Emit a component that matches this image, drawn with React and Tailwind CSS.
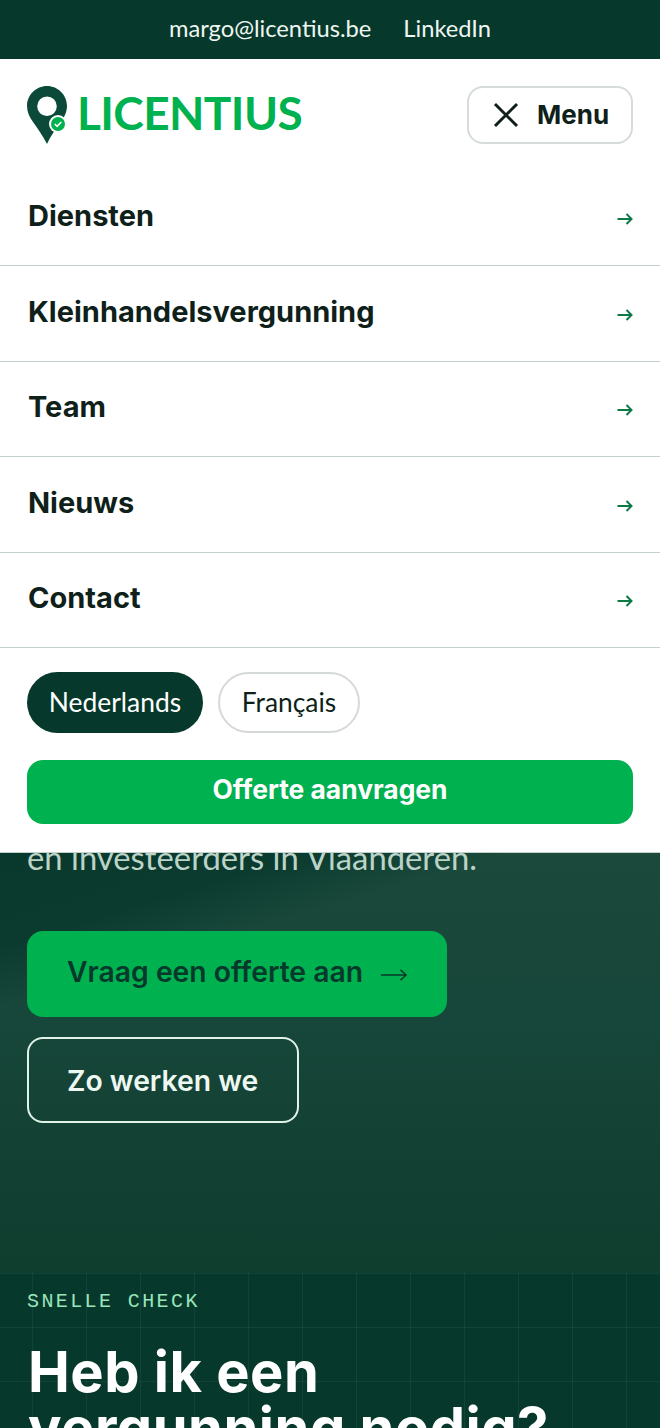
import React from "react";

const menuItems = [
  { label: "Diensten", height: "h-[96px]" },
  { label: "Kleinhandelsvergunning", height: "h-[96px]" },
  { label: "Team", height: "h-[95px]" },
  { label: "Nieuws", height: "h-[96px]" },
  { label: "Contact", height: "h-[95px]" },
];

const heading = "font-['Inter','Liberation_Sans',sans-serif]";
const body = "font-['Lato','Noto_Sans',sans-serif]";

function LogoPin() {
  return (
    <svg width="42" height="58" viewBox="0 0 42 58" className="shrink-0">
      {/* pin with hole */}
      <path
        fillRule="evenodd"
        fill="#0b4a38"
        d="M20 0C9 0 0 9 0 20c0 6 2.500 11 6 16 5 7 10 14 14 22 3-7 8-14 13-21 4-5 7-11 7-17C40 9 31 0 20 0Zm0 10.500a9.800 9.800 0 1 1 0 19.600 9.800 9.800 0 0 1 0-19.600Z"
      />
      <circle cx="31" cy="38" r="9" fill="#ffffff" />
      <circle cx="31" cy="38" r="7" fill="#00b14f" />
      <path d="M27.800 38l2.300 2.300 4.200-4.300" fill="none" stroke="#ffffff" strokeWidth="1.700" />
    </svg>
  );
}

function SmallArrow() {
  return (
    <svg width="16" height="12" viewBox="0 0 16 12" fill="none" stroke="#0b7a45" strokeWidth="2">
      <path d="M0.500 6H14.500" />
      <path d="M9.500 1l5 5-5 5" />
    </svg>
  );
}

export default function App() {
  return (
    <div className={`h-[1428px] w-[660px] overflow-hidden bg-white ${body}`}>
      {/* Top contact bar */}
      <div className="flex h-[59px] items-center justify-center gap-[32px] bg-[#06392b] pb-[2px] text-[23.700px] text-[#eef6f1]">
        <span>margo@licentius.be</span>
        <span>LinkedIn</span>
      </div>

      {/* Header */}
      <div className="flex h-[111px] items-start justify-between px-[27px] pt-[27px]">
        <div className="flex items-start gap-[8px]">
          <LogoPin />
          <span className="mt-[-1px] text-[46px] leading-[56px] font-bold tracking-[-0.600px] text-[#00b14f]">
            LICENTIUS
          </span>
        </div>
        <button className="flex h-[58px] w-[166px] items-center gap-[18px] rounded-[16px] border-2 border-[#d5dcd9] pl-[24px] text-[#0f1f1a]">
          <svg width="26" height="26" viewBox="0 0 26 26" stroke="#0f1f1a" strokeWidth="3" fill="none">
            <path d="M2 2l22 22M24 2L2 24" />
          </svg>
          <span className={`${heading} pb-[2px] text-[26px] font-bold`}>Menu</span>
        </button>
      </div>

      {/* Menu links */}
      <div>
        {menuItems.map((item) => (
          <div
            key={item.label}
            className={`flex ${item.height} items-center justify-between border-b border-[#c3d1cc] pr-[27px] pb-[4px] pl-[28px]`}
          >
            <span className={`${heading} text-[29px] font-bold text-[#0f1f1a]`}>{item.label}</span>
            <span className="mt-[6px]">
              <SmallArrow />
            </span>
          </div>
        ))}
      </div>

      {/* Language switch + CTA */}
      <div className="flex h-[205px] flex-col border-b border-[#c3d1cc] px-[27px] pt-[24px]">
        <div className="flex gap-[15px]">
          <span className="flex h-[61px] w-[176px] items-center justify-center rounded-full bg-[#06392b] text-[26.400px] text-white">
            Nederlands
          </span>
          <span className="flex h-[61px] w-[142px] items-center justify-center rounded-full border-2 border-[#d5d9d7] text-[26.400px] text-[#0f1f1a]">
            Français
          </span>
        </div>
        <button className={`mt-[27px] h-[64px] w-full rounded-[16px] bg-[#00b14f] pb-[4px] ${heading} text-[26.400px] font-bold text-white`}>
          Offerte aanvragen
        </button>
      </div>

      {/* Hero, cut off by the open menu */}
      <div className="relative h-[420px] overflow-hidden bg-[linear-gradient(180deg,#1b4a3c_0%,#17463a_40%,#0f3e2f_100%)] px-[27px]">
        <div className="absolute inset-0 bg-[linear-gradient(163deg,#08392c_0%,#0a3b2e_15%,rgba(10,59,46,0)_25%)]" />
        <div className="relative">
          <p className="mt-[-13px] text-[32.800px] leading-[36px] text-[#bcd3c8]">en investeerders in Vlaanderen.</p>
          <button className={`mt-[55px] flex h-[86px] w-[420px] items-center gap-[17px] rounded-[16px] bg-[#00b14f] pb-[4px] pl-[40px] ${heading} text-[28.300px] font-semibold text-[#06392b]`}>
            Vraag een offerte aan
            <svg width="28" height="14" viewBox="0 0 30 14" fill="none" stroke="#06392b" strokeWidth="1.500" className="mt-[5px]">
              <path d="M1 7H28M22 1.500 28 7l-6 5.500" />
            </svg>
          </button>
          <button className={`mt-[20px] flex h-[86px] w-[272px] items-center rounded-[16px] border-2 border-[#dff3e8] pt-[2px] pl-[38px] ${heading} text-[28.300px] font-semibold text-[#eef8f2]`}>
            Zo werken we
          </button>
        </div>
      </div>

      {/* Quick check section */}
      <div className="h-[155px] overflow-hidden bg-[#06392b] bg-[linear-gradient(rgba(255,255,255,0.05)_1px,transparent_1px),linear-gradient(90deg,rgba(255,255,255,0.05)_1px,transparent_1px)] bg-[size:54px_54px] bg-[position:32px_0] px-[27px] pt-[16px]">
        <p className="font-['Liberation_Mono',monospace] text-[20px] leading-[26px] tracking-[2.400px] text-[#9be5bb]">
          SNELLE CHECK
        </p>
        <h2 className={`mt-[29px] pl-[1px] ${heading} text-[56px] leading-[56px] font-bold tracking-[0.500px] text-white`}>
          Heb ik een
          <br />
          vergunning nodig?
        </h2>
      </div>
    </div>
  );
}
